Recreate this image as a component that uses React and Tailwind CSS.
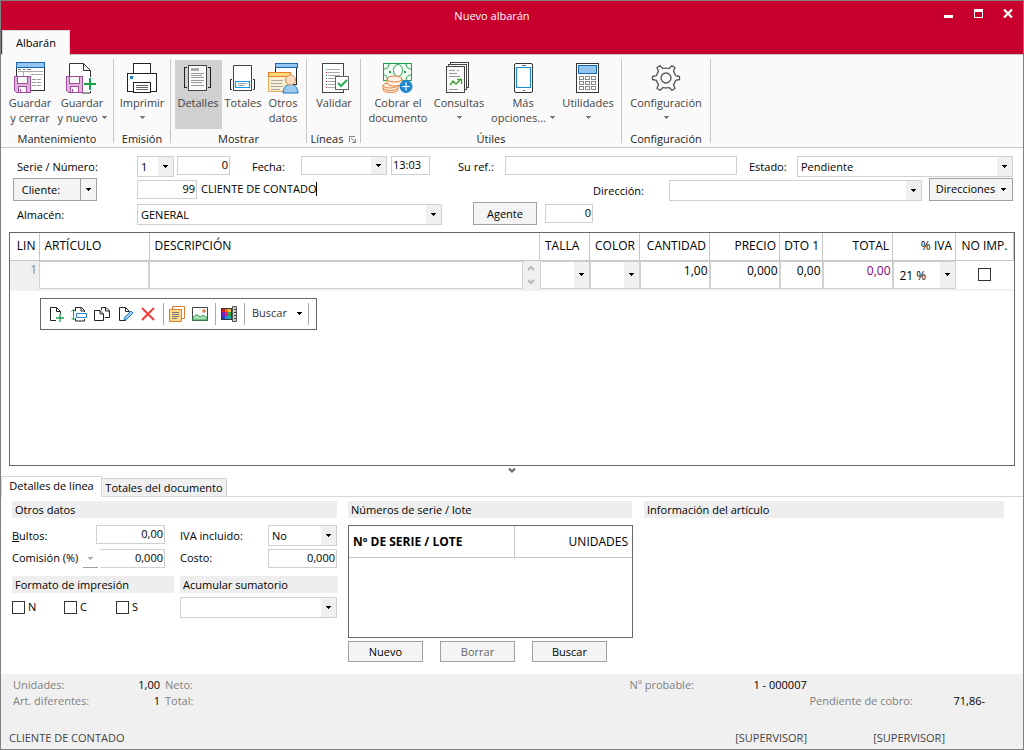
import React from "react";

/* ---------- shared controls ---------- */

function Triangle({ className = "text-black" }) {
  return (
    <svg className={className} width="5" height="3" viewBox="0 0 5 3" shapeRendering="crispEdges" aria-hidden="true">
      <path d="M0 0h5v1H0zM1 1h3v1H1zM2 2h1v1H2z" fill="currentColor" />
    </svg>
  );
}

function Combo({ id, label, value = "", className = "", pad = "pl-[3px]" }) {
  return (
    <div className={`relative ${className}`}>
      <select
        id={id}
        aria-label={label}
        className={`h-full w-full appearance-none rounded-none border border-[#d0d0d0] bg-white pt-0.5 pr-4 pb-0 outline-none ${pad}`}
        defaultValue={value}
      >
        <option value={value}>{value}</option>
      </select>
      <span className="pointer-events-none absolute inset-y-px right-px flex w-[15px] items-center justify-center bg-[#f0f0f0]">
        <Triangle />
      </span>
    </div>
  );
}

function Field({ id, label, value = "", className = "" }) {
  return (
    <input
      id={id}
      aria-label={label}
      defaultValue={value}
      className={`h-[19px] rounded-none border border-[#d0d0d0] bg-white px-px pb-0.5 outline-none ${className}`}
    />
  );
}

function PushButton({ children, className = "" }) {
  return (
    <button type="button" className={`border border-[#a0a0a0] bg-[#f4f4f4] pt-0.5 text-center ${className}`}>
      {children}
    </button>
  );
}

/* ---------- ribbon icons ---------- */

function Icon({ children, size = 32 }) {
  return (
    <svg width={size} height={size} viewBox={`0 0 ${size} ${size}`} fill="none" aria-hidden="true">
      {children}
    </svg>
  );
}

function Floppy() {
  return (
    <g shapeRendering="crispEdges">
      <path d="M.5 14.500h16v16h-14l-2-2z" fill="#e0b5dc" stroke="#a04aa0" />
      <path d="M3.500 14.500h10v7h-10z" fill="#fafafa" stroke="#a04aa0" />
      <path d="M4.500 24.500h8v6h-8z" fill="#fafafa" stroke="#a04aa0" />
      <path d="M6.500 27v3" stroke="#a04aa0" />
    </g>
  );
}

function SaveCloseIcon() {
  return (
    <Icon>
      <g shapeRendering="crispEdges">
        <path d="M2.500 5v23.500h28V5" fill="#fff" stroke="#333" />
        <path d="M2.500.5h28v5h-28z" fill="#92c5f0" stroke="#1a69b0" />
        <path d="M4 7.500h3M9 7.500h2M13 7.500h4" stroke="#777" />
        <path d="M4 9.500h25M9.500 10v4M17 12.500h12" stroke="#aaa" />
        <path d="M18 17.500h10M18 20.500h10M18 23.500h10" stroke="#999" strokeDasharray="4 1" />
      </g>
      <Floppy />
    </Icon>
  );
}

function SaveNewIcon() {
  return (
    <Icon>
      <path d="M3.500 14V1.500h14l7 7V31H16" fill="#fff" stroke="#333" />
      <path d="M17.500 1.500v7h7" stroke="#333" />
      <Floppy />
      <path d="M24 15v14M17 22h14" stroke="#fafafa" strokeWidth="4" />
      <path d="M24 16v12M18 22h12" stroke="#16a34a" strokeWidth="2" />
    </Icon>
  );
}

function PrinterIcon() {
  return (
    <Icon>
      <g shapeRendering="crispEdges" fill="#fff" stroke="#222">
        <path d="M7.500 11.500v-10h17v10" />
        <path d="M1.500 11.500h29v18h-29z" />
        <path d="M7.500 20.500h17v10h-17z" />
        <path d="M10 23.500h12M10 25.500h12M10 27.500h12" stroke="#666" />
      </g>
      <path d="M4 14h3v3H4z" fill="#1e7fd0" />
    </Icon>
  );
}

function DetailIcon() {
  return (
    <Icon>
      <g shapeRendering="crispEdges">
        <path d="M6.500 3.500h18v25h-18z" fill="#fafafa" stroke="#444" />
        <path d="M9 6h8v3H9z" fill="#aaa" />
        <path d="M9 11.500h13M9 13.500h11M9 15.500h13M9 18.500h13M9 20.500h11M9 23.500h13" stroke="#999" />
        <path d="M5 5.500H2.500v20H5M26 5.500h2.500v20H26" stroke="#222" />
      </g>
    </Icon>
  );
}

function TotalsIcon() {
  return (
    <Icon>
      <path d="M6.500 3.500h18v25h-18z" fill="#fff" stroke="#444" />
      <path d="M5.500 17.500h-2v10h2M25.500 17.500h2v10h-2" stroke="#222" />
      <path d="M5 17h21v11H5z" fill="#fff" />
      <path d="M6.500 16v12.500h18V16" stroke="#444" />
      <path d="M8.500 19.500h14v6h-14z" fill="#fff" stroke="#0f9be0" strokeWidth="1.200" />
      <path d="M11 21.500h9M11 23.500h7" stroke="#aaa" />
    </Icon>
  );
}

function OtherDataIcon() {
  return (
    <Icon>
      <g shapeRendering="crispEdges">
        <path d="M8.500 5.500h21v17h-21z" fill="#fff" stroke="#222" />
        <path d="M8.500 1.500h22v4h-22z" fill="#92c5f0" stroke="#1a69b0" />
        <path d="M1.500 14.500h21v15h-21z" fill="#fcefcf" stroke="#e6a95c" />
        <path d="M1.500 10.500h22v4h-22z" fill="#ffd978" stroke="#e08030" />
        <path d="M4 18.500h12M4 21.500h11M4 24.500h12M4 27.500h9" stroke="#a9a9a9" />
      </g>
      <path d="M16 31c.5-6 3-8.500 7.500-8.500S30.500 25 31 31z" fill="#9bcaf0" stroke="#1a75bd" />
      <circle cx="23.500" cy="18" r="5" fill="#f9dcc0" stroke="#d59060" />
    </Icon>
  );
}

function ValidateIcon() {
  return (
    <Icon>
      <g shapeRendering="crispEdges">
        <path d="M4.500 1.500h21v29h-21z" fill="#fff" stroke="#444" />
        <path d="M10 7.500h12M10 10.500h12M10 13.500h12M10 16.500h7M10 19.500h7M10 22.500h7M10 25.500h9" stroke="#aaa" />
        <path d="M8 7h1v1H8zM8 13h1v1H8zM8 16h1v1H8zM8 22h1v1H8z" fill="#16a34a" />
        <path d="M8 10h1v1H8zM8 19h1v1H8zM8 25h1v1H8z" fill="#d1002b" />
        <path d="M17.500 14.500h13v13h-13z" fill="#fff" stroke="#666" />
      </g>
      <path d="m20 21 3 3 6-6" stroke="#26b050" strokeWidth="2" />
    </Icon>
  );
}

function CashIcon() {
  return (
    <Icon>
      <path d="M1.500 1.500h28v17h-28z" fill="#f1fbf4" stroke="#1fa14a" shapeRendering="crispEdges" />
      <path d="M2 7c3 0 5-2 5-5M24 2c0 3 2 5 5 5M24 18c0-3 2-5 5-5M2 13c2 0 3 1 3 3" stroke="#1fa14a" />
      <ellipse cx="16" cy="8.500" rx="4.500" ry="6" fill="#fff" stroke="#1fa14a" />
      <path d="M7 9h2v2H7zM22 9h2v2h-2z" fill="#1fa14a" />
      <g fill="#fff1e4" stroke="#e0803c">
        <path d="M1 26.500v1c0 4 15 4 15 0v-2z" />
        <path d="M1 23.500v2c0 4 15 4 15 0v-3z" />
        <ellipse cx="8" cy="23.500" rx="7" ry="2.500" />
        <path d="M5 17v4c0 4 15 4 15 0v-4z" />
        <ellipse cx="12.500" cy="17" rx="7.500" ry="3" />
      </g>
      <circle cx="24" cy="24.500" r="6.500" fill="#1e88d2" />
      <path d="M24 20.500v8M20 24.500h8" stroke="#fff" strokeWidth="1.200" />
    </Icon>
  );
}

function QueryIcon() {
  return (
    <Icon>
      <g shapeRendering="crispEdges" fill="#fafafa" stroke="#444">
        <path d="M7.500.5h18v25h-18z" />
        <path d="M5.500 2.500h18v25h-18z" />
        <path d="M3.500 4.500h18v26h-18z" />
        <path d="M6 8.500h6M14 8.500h2M6 11.500h8M6 14.500h11M6 27.500h9" stroke="#999" />
      </g>
      <path d="m7 23 3-4 3 3 5-5M14 17.500h4.500V22" stroke="#38a528" strokeWidth="1.300" />
    </Icon>
  );
}

function PhoneIcon() {
  return (
    <Icon>
      <rect x="7.500" y="1.500" width="18" height="29" rx="1.500" fill="#fff" stroke="#333" />
      <path d="M9.500 5.500h14v20h-14z" stroke="#1e88d2" strokeWidth="1.200" />
      <path d="M15 3.500h4M16 28.500h2" stroke="#666" />
    </Icon>
  );
}

function CalculatorIcon() {
  return (
    <Icon>
      <g shapeRendering="crispEdges">
        <path d="M4.500 1.500h22v29h-22z" fill="#fff" stroke="#333" />
        <path d="M6.500 3.500h18v8h-18z" fill="#92c5f0" stroke="#1a69b0" />
        <path
          d="M7.500 14.500h4v3h-4zM13.500 14.500h4v3h-4zM19.500 14.500h4v3h-4zM7.500 19.500h4v3h-4zM13.500 19.500h4v3h-4zM19.500 19.500h4v3h-4zM7.500 24.500h4v3h-4zM13.500 24.500h4v3h-4zM19.500 24.500h4v3h-4z"
          stroke="#888"
        />
      </g>
    </Icon>
  );
}

function GearIcon() {
  return (
    <Icon>
      <path
        d="M2.500 14.500v3l4 .8c.4 1.800 1 3 2 4.200l-1.500 4 3 1.800 3-2.800c1.900.6 4.100.6 6 0l3 2.800 3-1.800-1.500-4c1-1.200 1.600-2.400 2-4.200l4-.8v-3l-4-.8c-.4-1.800-1-3-2-4.200l1.500-4-3-1.800-3 2.800c-1.900-.6-4.100-.6-6 0l-3-2.800-3 1.800 1.500 4c-1 1.200-1.600 2.400-2 4.200z"
        stroke="#555"
        strokeWidth="1.300"
        strokeLinejoin="round"
      />
      <circle cx="16" cy="16" r="5" stroke="#555" strokeWidth="1.300" />
    </Icon>
  );
}

/* ---------- ribbon ---------- */

function RibbonButton({ icon, line1, line2, arrow, className, active }) {
  return (
    <button
      type="button"
      className={`flex h-[69px] shrink-0 flex-col items-center pt-0.5 leading-[15px] whitespace-nowrap text-[#444] ${active ? "bg-[#d0d0d0]" : ""} ${className}`}
    >
      {icon}
      <span className="mt-px">{line1}</span>
      <span className="flex h-[15px] items-center gap-1">
        {line2}
        {arrow && <Triangle className="text-[#777]" />}
      </span>
    </button>
  );
}

function RibbonGroup({ title, children, className, pad = "", launcher }) {
  return (
    <section className={`flex flex-col border-r border-[#c6c6c6] ${className}`}>
      <div className={`flex pt-px ${pad}`}>{children}</div>
      <h2 className="mt-0.5 flex h-4 items-center justify-center gap-1.5 text-[#222]">
        {title}
        {launcher && (
          <button type="button" aria-label="Opciones de líneas">
            <svg width="7" height="7" viewBox="0 0 7 7" fill="none" stroke="#888" shapeRendering="crispEdges" aria-hidden="true">
              <path d="M.5 6V.5H6M2 2l4 4M6.500 3v3.500H3" />
            </svg>
          </button>
        )}
      </h2>
    </section>
  );
}

function Ribbon() {
  return (
    <div className="flex h-[93px] border-b border-[#c6c6c6] bg-[#fafafa] pt-1 pb-1">
      <RibbonGroup title="Mantenimiento" className="w-[113px]" pad="pl-[3px]">
        <RibbonButton icon={<SaveCloseIcon />} line1="Guardar" line2="y cerrar" className="w-[52px]" />
        <RibbonButton icon={<SaveNewIcon />} line1="Guardar" line2="y nuevo" arrow className="w-[52px]" />
      </RibbonGroup>
      <RibbonGroup title="Emisión" className="w-[57px]">
        <RibbonButton icon={<PrinterIcon />} line1="Imprimir" arrow className="w-[56px]" />
      </RibbonGroup>
      <RibbonGroup title="Mostrar" className="w-[136px]" pad="pl-1">
        <RibbonButton active icon={<DetailIcon />} line1="Detalles" className="w-[47px] pr-px" />
        <RibbonButton icon={<TotalsIcon />} line1="Totales" className="w-[41px] pl-px" />
        <RibbonButton icon={<OtherDataIcon />} line1="Otros" line2="datos" className="w-[40px]" />
      </RibbonGroup>
      <RibbonGroup title="Líneas" launcher className="w-[54px]">
        <RibbonButton icon={<ValidateIcon />} line1="Validar" className="w-[53px] pl-px" />
      </RibbonGroup>
      <RibbonGroup title="Útiles" className="w-[261px]" pad="pl-1.5">
        <RibbonButton icon={<CashIcon />} line1="Cobrar el" line2="documento" className="w-[62px]" />
        <RibbonButton icon={<QueryIcon />} line1="Consultas" arrow className="w-[60px]" />
        <RibbonButton icon={<PhoneIcon />} line1="Más" line2="opciones..." arrow className="w-[68px]" />
        <RibbonButton icon={<CalculatorIcon />} line1="Utilidades" arrow className="w-[62px]" />
      </RibbonGroup>
      <RibbonGroup title="Configuración" className="w-[89px]">
        <RibbonButton icon={<GearIcon />} line1="Configuración" arrow className="w-[88px]" />
      </RibbonGroup>
    </div>
  );
}

/* ---------- title bar ---------- */

function TitleBar() {
  return (
    <header className="border-b border-[#c6c6c6] bg-[#c8002d]">
      <div className="flex h-[29px] text-white">
        <h1 className="flex-1 pl-[50px] text-center leading-[29px]">Nuevo albarán</h1>
        <button type="button" aria-label="Minimizar" className="flex w-[30px] items-center justify-center pb-1">
          <svg width="9" height="9" viewBox="0 0 9 9" shapeRendering="crispEdges"><path d="M0 6h9v3H0z" fill="#fff" /></svg>
        </button>
        <button type="button" aria-label="Maximizar" className="flex w-[30px] items-center justify-center pb-1">
          <svg width="9" height="9" viewBox="0 0 9 9" shapeRendering="crispEdges"><path d="M0 0h9v9H0zM1 3v5h7V3z" fillRule="evenodd" fill="#fff" /></svg>
        </button>
        <button type="button" aria-label="Cerrar" className="flex w-[30px] items-center justify-center pb-1">
          <svg width="10" height="9" viewBox="0 0 10 9"><path d="m1 .5 8 8m0-8-8 8" stroke="#fff" strokeWidth="2.200" /></svg>
        </button>
      </div>
      <div className="-mb-px flex h-[25px] pl-px">
        <button type="button" className="w-[68px] border border-b-0 border-[#d8d8d8] bg-[#fafafa] text-black">
          Albarán
        </button>
      </div>
    </header>
  );
}

/* ---------- document header form ---------- */

function DocumentForm() {
  return (
    <form className="flex flex-col pt-2 pr-[10px] pl-3">
      <div className="flex h-[22px] items-start">
        <label htmlFor="serie" className="w-[124px] pl-1 leading-[22px]">Serie / Número:</label>
        <Combo id="serie" value="1" className="h-[21px] w-[37px]" />
        <Field label="Número" value="0" className="ml-[3px] w-[53px] text-right" />
        <label htmlFor="fecha" className="ml-[22px] w-[49px] leading-[22px]">Fecha:</label>
        <Combo id="fecha" className="h-[19px] w-[86px]" />
        <Field label="Hora" value="13:03" className="ml-1 w-[39px]" />
        <label htmlFor="ref" className="ml-7 w-[47px] leading-[22px]">Su ref.:</label>
        <Field id="ref" className="min-w-0 flex-1" />
        <label htmlFor="estado" className="ml-3 w-12 leading-[22px]">Estado:</label>
        <Combo id="estado" value="Pendiente" className="h-[21px] w-[216px]" />
      </div>
      <div className="flex h-6 items-start">
        <div className="mr-10 flex w-[84px]">
          <PushButton className="h-[23px] flex-1 pr-3">Cliente:</PushButton>
          <button type="button" aria-label="Más opciones de cliente" className="flex h-[23px] w-4 items-center justify-center border border-l-0 border-[#a0a0a0] bg-[#f4f4f4]">
            <Triangle />
          </button>
        </div>
        <Field label="Código de cliente" value="99" className="mt-0.5 w-[60px] text-right" />
        <input
          aria-label="Nombre del cliente"
          defaultValue="CLIENTE DE CONTADO"
          className="ml-1 h-5 [field-sizing:content] outline-none"
        />
        <span className="mt-1 h-[14px] w-px bg-black" />
        <label htmlFor="direccion" className="ml-auto w-[76px] leading-[26px]">Dirección:</label>
        <Combo id="direccion" className="mt-0.5 h-[21px] w-[253px]" />
        <button type="button" className="ml-[7px] flex h-[23px] w-[84px] items-center justify-center gap-1.5 border border-[#a0a0a0] bg-[#f4f4f4]">
          Direcciones <Triangle />
        </button>
      </div>
      <div className="flex h-6 items-start">
        <label htmlFor="almacen" className="w-[124px] pl-1 leading-[26px]">Almacén:</label>
        <Combo id="almacen" value="GENERAL" className="mt-0.5 h-[21px] w-[305px]" />
        <PushButton className="ml-[31px] h-[23px] w-16">Agente</PushButton>
        <Field label="Agente" value="0" className="mt-0.5 ml-2 w-12 text-right" />
      </div>
    </form>
  );
}

/* ---------- line grid ---------- */

const COLUMNS = [
  { name: "LIN", width: "w-[29px]", align: "text-right pr-[3px]" },
  { name: "ARTÍCULO", width: "w-[110px]", align: "text-left pl-[5px]" },
  { name: "DESCRIPCIÓN", width: "", align: "text-left pl-[5px]" },
  { name: "TALLA", width: "w-[50px]", align: "text-left pl-[5px]" },
  { name: "COLOR", width: "w-[50px]", align: "text-left pl-[5px]" },
  { name: "CANTIDAD", width: "w-[70px]", align: "text-right pr-[3px]" },
  { name: "PRECIO", width: "w-[70px]", align: "text-right pr-[3px]" },
  { name: "DTO 1", width: "w-[43px]", align: "text-right pr-[3px]" },
  { name: "TOTAL", width: "w-[70px]", align: "text-right pr-[3px]" },
  { name: "% IVA", width: "w-[63px]", align: "text-right pr-[3px]" },
  { name: "NO IMP.", width: "w-[58px]", align: "text-center" },
];

function Cell({ label, value = "", className = "" }) {
  return (
    <input
      aria-label={label}
      defaultValue={value}
      className={`block h-7 w-full rounded-none border border-[#d0d0d0] bg-white px-px pb-2 outline-none ${className}`}
    />
  );
}

function ToolIcon({ label, children }) {
  return (
    <button type="button" aria-label={label} className="flex w-[23px] items-center justify-end pr-[3px]">
      <svg width="16" height="16" viewBox="0 0 16 16" fill="none" aria-hidden="true">{children}</svg>
    </button>
  );
}

function ToolSeparator() {
  return <span className="h-[22px] w-px bg-[#a8a8a8]" />;
}

function LineToolbar() {
  return (
    <div className="mt-[7px] ml-[30px] flex h-8 w-fit items-center border border-[#666] pr-[7px] pl-[3px]" role="toolbar">
      <ToolIcon label="Nueva línea">
        <path d="M8 14.500H2.500v-13h6l4 4V8M8.500 1.500v4h4" stroke="#222" />
        <path d="M12 8v8M8 12h8" stroke="#16a34a" strokeWidth="1.300" />
      </ToolIcon>
      <ToolIcon label="Insertar línea">
        <path d="M4.500 5V1.500h6l3 3V6M10 1.500V5h4M4.500 12v3h9v-2" stroke="#222" />
        <path d="M5.500 7.500h10v4h-10z" stroke="#2a86cf" />
        <path d="M2.500 4v9M.5 5.500l2-2 2 2M.5 12l2 2 2-2" stroke="#16a34a" />
      </ToolIcon>
      <ToolIcon label="Copiar línea">
        <path d="M6 4.500H.5v10h9V8L6 4.500V8h3.500" stroke="#222" />
        <path d="M7.500 4V1.500h4.500l3.500 3.500v6.500H11M11.500 1.500V5h4" stroke="#222" />
      </ToolIcon>
      <ToolIcon label="Modificar línea">
        <path d="M9 14.500H2.500v-13h6l4 4M8.500 1.500v4h4" stroke="#222" />
        <path d="m7 14 1-3 6-6 2 2-6 6z" fill="#92c5f0" stroke="#2a86cf" />
      </ToolIcon>
      <ToolIcon label="Eliminar línea">
        <path d="m2 2 12 12M14 2 2 14" stroke="#ee3b3b" strokeWidth="2" />
      </ToolIcon>
      <span className="w-1" />
      <ToolSeparator />
      <span className="w-px" />
      <ToolIcon label="Notas">
        <path d="M3.500 3V.5h12v12H13" fill="#fff" stroke="#dc7f30" />
        <path d="M.5 3.500h12v12H.5z" fill="#ffd98c" stroke="#dc7f30" />
        <path d="M3 6.500h7M3 8.500h7M3 10.500h7M3 12.500h5" stroke="#777" />
      </ToolIcon>
      <ToolIcon label="Imagen">
        <path d="M.5 1.500h15v13H.5z" fill="#fff" stroke="#444" />
        <circle cx="12" cy="5" r="1.700" fill="#e67632" />
        <path d="M1 12c2-4 5-4 7-1 2-2 5-2 7 1v2H1z" fill="#a8dcb5" stroke="#2e9e4b" />
      </ToolIcon>
      <span className="w-1" />
      <ToolSeparator />
      <span className="w-px" />
      <ToolIcon label="Tallas y colores">
        <path d="M0 2h11v12H0z" fill="#333" />
        <path d="M1 3h3v3H1z" fill="#d32020" /><path d="M4 3h3v3H4z" fill="#f26b1c" /><path d="M7 3h3v3H7z" fill="#f7c531" />
        <path d="M1 6h3v4H1z" fill="#7b20b0" /><path d="M4 6h3v4H4z" fill="#e0209a" /><path d="M7 6h3v4H7z" fill="#36a53a" />
        <path d="M1 10h3v3H1z" fill="#2640c8" /><path d="M4 10h3v3H4z" fill="#2486de" /><path d="M7 10h3v3H7z" fill="#18b4b4" />
        <path d="M11.500.5h4v15h-4z" fill="#ccc" stroke="#555" />
        <path d="M13 3.500h2M13 6.500h2M13 9.500h2M13 12.500h2" stroke="#444" />
      </ToolIcon>
      <span className="w-1" />
      <ToolSeparator />
      <button type="button" className="flex w-[63px] items-center justify-between pr-1.5 pl-[7px] text-[#333]">
        Buscar <Triangle />
      </button>
      <ToolSeparator />
    </div>
  );
}

function LineGrid() {
  return (
    <div className="mx-[8px] mt-1.5 flex-1 border border-[#666]">
      <table className="w-full table-fixed border-collapse text-[12px]">
        <thead>
          <tr className="h-[27px]">
            {COLUMNS.map((c) => (
              <th key={c.name} scope="col" className={`border-r border-b border-[#c6c6c6] p-0 font-normal ${c.width} ${c.align}`}>
                {c.name}
              </th>
            ))}
          </tr>
        </thead>
        <tbody>
          <tr className="border-b-2 border-[#f0f0f0] leading-[18px]">
            <td className="bg-[#f0f0f0] p-0 pr-0.5 text-right align-top text-[#888]">1</td>
            <td className="p-0"><Cell label="Artículo" /></td>
            <td className="p-0">
              <div className="flex bg-[#f0f0f0]">
                <Cell label="Descripción" className="min-w-0 flex-1" />
                <div className="flex w-[17px] flex-col items-center justify-between py-1">
                  <svg width="8" height="6" viewBox="0 0 8 6" fill="none" aria-hidden="true"><path d="m1 5 3-3 3 3" stroke="#b8b8b8" strokeWidth="2" /></svg>
                  <svg width="8" height="6" viewBox="0 0 8 6" fill="none" aria-hidden="true"><path d="m1 1 3 3 3-3" stroke="#b8b8b8" strokeWidth="2" /></svg>
                </div>
              </div>
            </td>
            <td className="p-0"><Combo label="Talla" className="h-7" /></td>
            <td className="p-0"><Combo label="Color" className="h-7" /></td>
            <td className="p-0"><Cell label="Cantidad" value="1,00" className="text-right" /></td>
            <td className="p-0"><Cell label="Precio" value="0,000" className="text-right" /></td>
            <td className="p-0"><Cell label="Descuento 1" value="0,00" className="text-right" /></td>
            <td className="p-0"><Cell label="Total" value="0,00" className="text-right text-[#800080]" /></td>
            <td className="p-0"><Combo label="% IVA" value="21 %" className="h-7" pad="pl-1.5" /></td>
            <td className="p-0">
              <div className="flex justify-center">
                <input type="checkbox" aria-label="No imprimir" className="h-[13px] w-[13px] appearance-none border border-[#333] bg-white checked:bg-[#333]" />
              </div>
            </td>
          </tr>
        </tbody>
      </table>
      <LineToolbar />
    </div>
  );
}

/* ---------- detail panels ---------- */

function PanelTitle({ children, className = "" }) {
  return <h3 className={`h-[17px] bg-[#eee] pl-[3px] leading-[17px] ${className}`}>{children}</h3>;
}

function Check({ name }) {
  return (
    <label className="flex w-[52px] items-center gap-[3px]">
      <input type="checkbox" className="h-[13px] w-[13px] appearance-none border border-[#333] bg-white checked:bg-[#333]" />
      {name}
    </label>
  );
}

function OtherData() {
  return (
    <section className="w-[325px] shrink-0">
      <PanelTitle>Otros datos</PanelTitle>
      <div className="mt-[7px] flex h-6 items-start">
        <label htmlFor="bultos" className="w-[84px] leading-[22px]"><u>B</u>ultos:</label>
        <Field id="bultos" value="0,00" className="w-[69px] text-right" />
        <label htmlFor="iva" className="ml-[15px] w-[88px] leading-[22px]">IVA incluido:</label>
        <Combo id="iva" value="No" className="h-[21px] w-[69px]" />
      </div>
      <div className="flex h-[27px] items-start">
        <label htmlFor="comision" className="w-[71px] leading-[18px]">Comisión (%)</label>
        <button type="button" aria-label="Opciones de comisión" className="flex h-[19px] w-[15px] items-center justify-center border-b border-[#a0a0a0]">
          <Triangle className="text-[#aaa]" />
        </button>
        <Field id="comision" value="0,000" className="ml-0.5 w-[65px] border-l-0 text-right" />
        <label htmlFor="costo" className="ml-[15px] w-[88px] leading-[18px]">Costo:</label>
        <Field id="costo" value="0,000" className="w-[69px] text-right" />
      </div>
      <div className="flex gap-1.5">
        <div className="w-[162px] shrink-0">
          <PanelTitle>Formato de impresión</PanelTitle>
          <div className="flex h-7 items-center">
            <Check name="N" />
            <Check name="C" />
            <Check name="S" />
          </div>
        </div>
        <div className="w-[158px] shrink-0">
          <PanelTitle>Acumular sumatorio</PanelTitle>
          <Combo label="Acumular sumatorio" className="mt-1 mr-px h-[21px]" />
        </div>
      </div>
    </section>
  );
}

function SerialNumbers() {
  return (
    <section className="w-[285px] shrink-0">
      <PanelTitle className="mr-px">Números de serie / lote</PanelTitle>
      <div className="mt-[7px] h-[113px] border border-[#666]">
        <table className="w-full table-fixed border-collapse text-[12px]">
          <thead>
            <tr className="h-[31px] border-b border-[#c6c6c6]">
              <th scope="col" className="w-[165px] border-r border-[#c6c6c6] p-0 pt-0.5 pl-1 text-left font-bold">Nº DE SERIE / LOTE</th>
              <th scope="col" className="p-0 pt-0.5 pr-1 text-right font-normal">UNIDADES</th>
            </tr>
          </thead>
        </table>
      </div>
      <div className="mt-[3px] flex gap-[17px]">
        <PushButton className="h-[21px] w-[75px]">Nuevo</PushButton>
        <PushButton className="h-[21px] w-[75px] text-[#666]">Borrar</PushButton>
        <PushButton className="h-[21px] w-[75px]">Buscar</PushButton>
      </div>
    </section>
  );
}

function Details() {
  return (
    <>
      <div className="flex h-[10px] justify-center pt-0.5">
        <svg width="8" height="5" viewBox="0 0 8 5" fill="none" aria-hidden="true"><path d="m1 .5 3 3 3-3" stroke="#666" strokeWidth="2" /></svg>
      </div>
      <div className="flex items-end border-b border-[#d8d8d8]" role="tablist">
        <button type="button" role="tab" aria-selected="true" className="-mb-px h-[21px] w-[101px] border border-b-0 border-[#d8d8d8] bg-white pb-0.5">
          Detalles de línea
        </button>
        <button type="button" role="tab" aria-selected="false" className="h-[18px] w-[125px] border border-b-0 border-l-0 border-[#d0d0d0] bg-[#f0f0f0] pt-px">
          Totales del documento
        </button>
      </div>
      <div className="flex h-[177px] gap-[11px] pt-1 pr-[19px] pl-[11px]">
        <OtherData />
        <SerialNumbers />
        <section className="min-w-0 flex-1">
          <PanelTitle>Información del artículo</PanelTitle>
        </section>
      </div>
    </>
  );
}

/* ---------- footer ---------- */

function Footer() {
  return (
    <footer className="h-[75px] bg-[#f0f0f0] text-[#808080]">
      <div className="flex h-[52px] justify-between pt-[3px] pr-[38px] pl-3 leading-4">
        <dl className="grid h-8 grid-cols-[96px_51px_auto] content-start">
          <dt>Unidades:</dt>
          <dd className="text-right text-black">1,00</dd>
          <dt className="pl-[5px]">Neto:</dt>
          <dt>Art. diferentes:</dt>
          <dd className="text-right text-black">1</dd>
          <dt className="pl-[5px]">Total:</dt>
        </dl>
        <dl className="grid h-8 grid-cols-[124px_56px_124px_auto] content-start">
          <dt>Nº probable:</dt>
          <dd className="col-span-3 text-black">1 - 000007</dd>
          <dt className="col-start-3">Pendiente de cobro:</dt>
          <dd className="pl-5 text-black">71,86-</dd>
        </dl>
      </div>
      <div className="flex h-[23px] items-center pt-0.5 pr-[78px] pl-2 text-[#444]">
        <span className="flex-1">CLIENTE DE CONTADO</span>
        <span className="w-[138px]">[SUPERVISOR]</span>
        <span>[SUPERVISOR]</span>
      </div>
    </footer>
  );
}

export default function App() {
  return (
    <main className="flex min-h-screen flex-col border border-[#808080] bg-white font-['Open_Sans','Noto_Sans',sans-serif] text-[11px] text-black">
      <TitleBar />
      <Ribbon />
      <DocumentForm />
      <LineGrid />
      <Details />
      <Footer />
    </main>
  );
}
